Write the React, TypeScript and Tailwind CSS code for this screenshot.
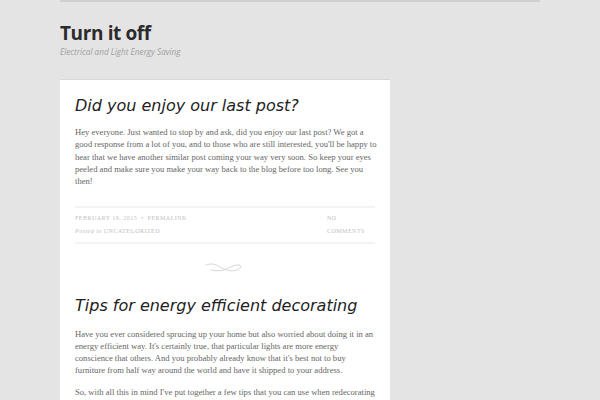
import React from "react";

const serif = { fontFamily: '"Liberation Serif", "DejaVu Serif", serif' };
const sans = { fontFamily: '"DejaVu Sans", sans-serif' };

function Meta() {
  return (
    <div className="mt-[19px] flex border-y-2 border-[#f3f3f3] pt-[4px] pb-[4px] text-[6px] uppercase tracking-[0.08em] text-[#c2c2c2]" style={serif}>
      <div className="flex-1 leading-[13px]">
        <div>February 19, 2015 &nbsp;•&nbsp; Permalink</div>
        <div><span className="normal-case italic">Posted in</span> Uncategorized</div>
      </div>
      <div className="w-[48px] leading-[13px]">
        <div>No</div>
        <div>Comments</div>
      </div>
    </div>
  );
}

function Ornament() {
  return (
    <div className="flex justify-center pt-[18px] pb-[24px]">
      <svg width="40" height="10" viewBox="0 0 40 10" fill="none">
        <path
          d="M1 3 C6 1, 10 2, 15 5 C20 8, 26 10, 32 8 C37 6, 37 3, 33 3 C28 3, 24 6, 19 8 C15 9, 10 9, 6 8"
          stroke="#d6d6d6"
          strokeWidth="1"
          strokeLinecap="round"
        />
      </svg>
    </div>
  );
}

export default function App() {
  return (
    <div className="h-[400px] w-full overflow-hidden bg-[#e4e4e4]">
      <div className="ml-[60px] w-[480px] border-t-2 border-[#d0d0d0]">
        <div className="pt-[19px] pb-[21px]">
          <h1 className="text-[19px] font-bold leading-[24px] tracking-[-0.02em] text-[#2b2b2b]" style={{ fontFamily: '"Open Sans", sans-serif' }}>
            Turn it off
          </h1>
          <p className="mt-[1px] text-[8.2px] italic leading-[12px] text-[#a0a0a0]" style={{ fontFamily: '"Open Sans", sans-serif' }}>
            Electrical and Light Energy Saving
          </p>
        </div>
      </div>
      <div className="ml-[60px] w-[330px] border-t border-[#d8d8d8] bg-white px-[15px] pt-[16px] pb-[20px]">
        <h2 className="text-[16px] italic leading-[20px] text-[#222]" style={sans}>
          Did you enjoy our last post?
        </h2>
        <p className="mt-[10px] mr-[-7px] text-[8.6px] leading-[12.3px] text-[#666]" style={serif}>
          Hey everyone. Just wanted to stop by and ask, did you enjoy our last post? We got a good response from a lot of you, and to those who are still interested, you'll be happy to hear that we have another similar post coming your way very soon. So keep your eyes peeled and make sure you make your way back to the blog before too long. See you then!
        </p>
        <Meta />
        <Ornament />
        <h2 className="text-[16px] italic leading-[20px] text-[#222]" style={sans}>
          Tips for energy efficient decorating
        </h2>
        <p className="mt-[13px] text-[8.6px] leading-[11.8px] text-[#666]" style={serif}>
          Have you ever considered sprucing up your home but also worried about doing it in an energy efficient way. It's certainly true, that particular lights are more energy conscience that others. And you probably already know that it's best not to buy furniture from half way around the world and have it shipped to your address.
        </p>
        <p className="mt-[10px] text-[8.6px] leading-[11.8px] text-[#666]" style={serif}>
          So, with all this in mind I've put together a few tips that you can use when redecorating your home and some things to look out for when you are buying new furniture.
        </p>
      </div>
    </div>
  );
}
